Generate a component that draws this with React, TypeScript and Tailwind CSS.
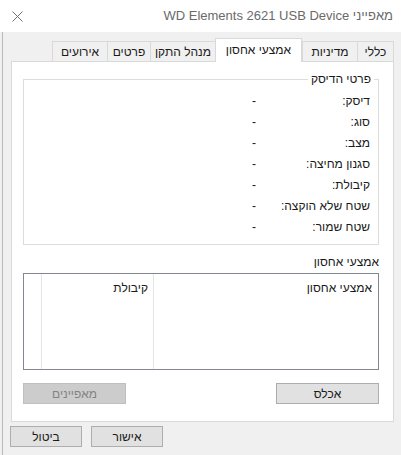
const font = { fontFamily: '"Liberation Sans", "DejaVu Sans", sans-serif' };

const tabs = [
  { label: 'כללי', width: 'w-[37px]' },
  { label: 'מדיניות', width: 'w-[55px]' },
  { label: 'אמצעי אחסון', width: 'w-[87px]', active: true },
  { label: 'מנהל התקן', width: 'w-[65px]' },
  { label: 'פרטים', width: 'w-[43px]' },
  { label: 'אירועים', width: 'w-[55px]' },
];

const diskRows = [
  'דיסק:',
  'סוג:',
  'מצב:',
  'סגנון מחיצה:',
  'קיבולת:',
  'שטח שלא הוקצה:',
  'שטח שמור:',
];

function CloseIcon() {
  return (
    <svg width="11" height="11" viewBox="0 0 11 11" className="text-[#6f6f6f]">
      <path d="M0.5 0.5 L10.5 10.5 M10.5 0.5 L0.5 10.5" stroke="currentColor" strokeWidth="1" fill="none" />
    </svg>
  );
}

function Button({ children, disabled }: { children: React.ReactNode; disabled?: boolean }) {
  return (
    <div
      className={
        disabled
          ? 'flex h-[21px] w-[103px] items-center justify-center border border-[#bfbfbf] bg-[#cccccc] text-[12px] text-[#838383]'
          : 'flex h-[21px] w-[103px] items-center justify-center border border-[#adadad] bg-[#e1e1e1] text-[12px] text-[#1a1a1a]'
      }
    >
      {children}
    </div>
  );
}

export default function App() {
  return (
    <div dir="rtl" style={font} className="flex h-[455px] w-[401px] flex-col overflow-hidden bg-[#f0f0f0] text-[12px] text-[#1a1a1a]">
      {/* Title bar */}
      <div className="flex h-[32px] shrink-0 items-center justify-between bg-white pl-[12px] pr-[8px]">
        <span className="text-[13px] text-[#6a6a6a]">מאפייני WD Elements 2621 USB Device</span>
        <CloseIcon />
      </div>

      <div className="ml-[2px] flex flex-1 flex-col border-l border-[#b9b9b9]">
        {/* Tabs */}
        <div className="mr-[7px] mt-[6px] flex h-[23px] items-end">
          {tabs.map((tab, i) =>
            tab.active ? (
              <div
                key={tab.label}
                className={`${tab.width} relative z-10 -mb-px flex h-[24px] items-center justify-center border border-b-0 border-[#d9d9d9] bg-white pb-[2px]`}
              >
                {tab.label}
              </div>
            ) : (
              <div
                key={tab.label}
                className={`${tab.width} flex h-[20px] items-center justify-center border-t border-l border-[#d9d9d9] bg-[#f0f0f0] ${i === 0 ? 'border-r' : ''}`}
              >
                {tab.label}
              </div>
            )
          )}
        </div>

        {/* Tab panel */}
        <div className="ml-[8px] mr-[7px] flex h-[361px] flex-col border border-[#d9d9d9] bg-white pl-[11px] pr-[14px] pt-[10px]">
          <fieldset className="border border-[#dcdcdc] pb-[7px] pr-[8px] pt-[3px]">
            <legend className="mr-[-4px] px-[3px] leading-[15px]">פרטי הדיסק</legend>
            {diskRows.map((label) => (
              <div key={label} className="flex h-[21px] items-center">
                <span className="w-[114px]">{label}</span>
                <span>-</span>
              </div>
            ))}
          </fieldset>

          <div className="mt-[10px] leading-[15px]">אמצעי אחסון</div>
          <div className="mt-[3px] flex h-[97px] border border-[#828790]">
            <div className="w-[224px] pr-[6px] pt-[5px]">אמצעי אחסון</div>
            <div className="w-[112px] border-r border-[#e5e5e5] pr-[5px] pt-[5px]">קיבולת</div>
            <div className="flex-1 border-r border-[#e5e5e5]" />
          </div>

          <div className="mt-[13px] flex justify-between">
            <Button>אכלס</Button>
            <Button disabled>מאפיינים</Button>
          </div>
        </div>

        {/* Dialog buttons */}
        <div className="mt-[4px] flex gap-[9px] pr-[8px]" dir="ltr">
          <div className="flex h-[21px] w-[72px] items-center justify-center border border-[#adadad] bg-[#e1e1e1] ml-[7px]">ביטול</div>
          <div className="flex h-[21px] w-[72px] items-center justify-center border border-[#adadad] bg-[#e1e1e1]">אישור</div>
        </div>
      </div>
    </div>
  );
}
